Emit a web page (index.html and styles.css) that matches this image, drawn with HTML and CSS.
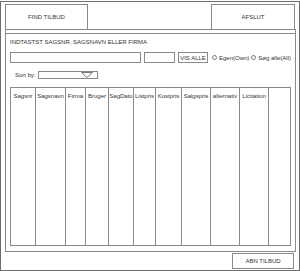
FILE: index.html
```html
<!DOCTYPE html>
<html lang="da">
<head>
  <meta charset="UTF-8">
  <title>Find tilbud</title>
  <link rel="stylesheet" href="styles.css">
</head>
<body>
  <div class="frame">
    <!-- Faner -->
    <div class="tabs">
      <div class="tab tab-find">FIND TILBUD</div>
      <div class="tab tab-exit">AFSLUT</div>
    </div>

    <div class="panel">
      <div class="panel-head">INDTASTST SAGSNR, SAGSNAVN ELLER FIRMA</div>

      <div class="search-row">
        <div class="field field-main"></div>
        <div class="field field-small"></div>
        <div class="btn btn-all">VIS ALLE</div>
        <label class="radio"><span class="dot"></span>Egen(Own)</label>
        <label class="radio"><span class="dot"></span>Søg alle(All)</label>
      </div>

      <div class="sort-row">
        <span class="sort-label">Sort by:</span>
        <div class="select">
          <svg width="12" height="6" viewBox="0 0 12 6"><polygon points="0.5,0.5 11.5,0.5 6,5.5" fill="none" stroke="#777" stroke-width="1"/></svg>
        </div>
      </div>

      <table class="grid">
        <thead>
          <tr>
            <th style="width:25px">Sagsnr</th>
            <th style="width:30px">Sagsnavn</th>
            <th style="width:20px">Firma</th>
            <th style="width:23px">Bruger</th>
            <th style="width:25px">SagDato</th>
            <th style="width:22px">Listpris</th>
            <th style="width:26px">Kostpris</th>
            <th style="width:29px">Salgspris</th>
            <th style="width:29px">alternativ</th>
            <th style="width:29px">Licitation</th>
            <th></th>
          </tr>
        </thead>
        <tbody>
          <tr>
            <td></td><td></td><td></td><td></td><td></td><td></td>
            <td></td><td></td><td></td><td></td><td></td>
          </tr>
        </tbody>
      </table>
    </div>

    <div class="footer">
      <div class="btn btn-open">ABN TILBUD</div>
    </div>
  </div>
</body>
</html>
```

FILE: styles.css
```css
:root {
  --line: #8a8a8a;
  --line-light: #b5b5b5;
  --text: #333;
}
* {
  margin: 0;
  padding: 0;
  box-sizing: border-box;
}
body {
  font-family: 'Liberation Sans', Arial, sans-serif;
  font-size: 6px;
  color: var(--text);
  background: #fff;
  padding-top: 1px;
}
.frame {
  width: 300px;
  height: 270px;
  border: 1px solid #6e6e6e;
  padding: 2px 3px 0 4px;
  display: flex;
  flex-direction: column;
}
/* Faner */
.tabs {
  display: flex;
  justify-content: space-between;
  height: 26px;
}
.tab {
  border: 1px solid var(--line);
  display: flex;
  align-items: center;
  justify-content: center;
}
.tab-find {
  width: 83px;
}
.tab-exit {
  width: 84px;
  margin-right: 1px;
}
.panel {
  margin-top: -1px;
  height: 223px;
  border: 1px solid var(--line);
  padding: 3px 4px 0 0;
  display: flex;
  flex-direction: column;
}
.panel-head {
  border-top: 1px solid var(--line);
  margin-right: -4px;
  height: 17px;
  line-height: 17px;
  padding-left: 4px;
}
.search-row {
  margin-top: 2px;
  height: 11px;
  padding-left: 4px;
  display: flex;
  align-items: center;
}
.field {
  height: 11px;
  border: 1px solid var(--line);
}
.field-main {
  width: 132px;
}
.field-small {
  width: 31px;
  margin-left: 3px;
}
.btn {
  border: 1px solid var(--line);
  display: flex;
  align-items: center;
  justify-content: center;
}
.btn-all {
  width: 30px;
  height: 11px;
  margin-left: 3px;
}
.radio {
  display: flex;
  align-items: center;
  margin-left: 4px;
  white-space: nowrap;
}
.radio + .radio {
  margin-left: 2px;
}
.dot {
  width: 5px;
  height: 5px;
  border: 1px solid #777;
  border-radius: 50%;
  margin-right: 2px;
}
.sort-row {
  margin-top: 8px;
  height: 8px;
  padding-left: 9px;
  display: flex;
  align-items: center;
}
.sort-label {
  width: 23px;
}
.select {
  width: 60px;
  height: 8px;
  border: 1px solid var(--line);
  display: flex;
  align-items: center;
  justify-content: flex-end;
  padding-right: 4px;
}
.select svg {
  display: block;
}
/* Tabel */
.grid {
  margin: 8px 0 0 4px;
  width: 281px;
  height: 159px;
  border-collapse: collapse;
  table-layout: fixed;
}
.grid th,
.grid td {
  border: 1px solid var(--line);
  border-top: none;
  border-bottom: none;
}
.grid th {
  border-top: 1px solid var(--line);
  height: 17px;
  font-weight: normal;
  text-align: center;
  white-space: nowrap;
  overflow: hidden;
}
.grid tbody tr td {
  border-bottom: 1px solid var(--line);
}
.footer {
  display: flex;
  justify-content: flex-end;
  margin-top: 1px;
  padding-right: 2px;
}
.btn-open {
  width: 62px;
  height: 16px;
}
```
